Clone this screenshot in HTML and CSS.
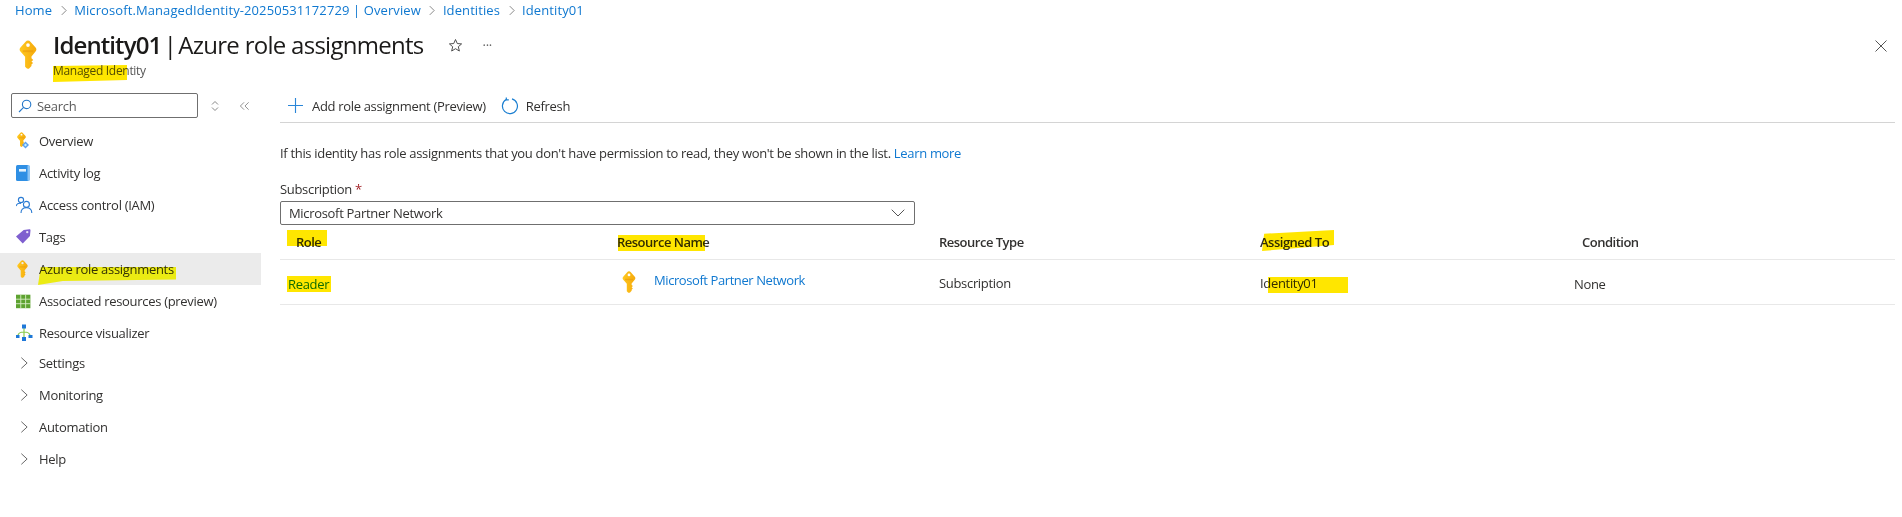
FILE: index.html
```html
<!DOCTYPE html>
<html lang="en">
<head>
<meta charset="utf-8">
<title>Identity01 | Azure role assignments</title>
<link rel="stylesheet" href="styles.css">
</head>
<body>
<svg class="defs" width="0" height="0" aria-hidden="true">
  <defs>
    <linearGradient id="keyGrad" x1="0" y1="0" x2="1" y2="0">
      <stop offset="0" stop-color="#ffc91f"/>
      <stop offset="1" stop-color="#f5a90c"/>
    </linearGradient>
    <symbol id="key" viewBox="0 0 18 30">
      <path fill="url(#keyGrad)" fill-rule="evenodd" d="M9 0.5 C10 0.5 10.8 1 11.5 1.8 L16.6 7.5 C18 9 18 10.6 16.8 12 L12.6 17 L12.6 19 L14.4 20.6 L12.6 22.2 L14.2 23.8 L12.6 25.4 L12.6 26.8 L10.4 29.2 C9.6 30 8 30 7.3 29 L6 27.6 L6 17.4 L1.2 12 C0 10.6 0 9 1.4 7.5 L6.5 1.8 C7.2 1 8 0.5 9 0.5 Z M9 3.4 A1.9 1.9 0 1 0 9 7.2 A1.9 1.9 0 1 0 9 3.4 Z"/>
      <rect x="3.6" y="10.6" width="10.8" height="2" fill="#e8950a" opacity=".55"/>
    </symbol>
  </defs>
</svg>

<nav class="crumbs">
  <a href="#">Home</a><span class="sep"><svg viewBox="0 0 8 12"><path d="M2 1l5 5-5 5"/></svg></span>
  <a href="#">Microsoft.ManagedIdentity-20250531172729 | Overview</a><span class="sep"><svg viewBox="0 0 8 12"><path d="M2 1l5 5-5 5"/></svg></span>
  <a href="#">Identities</a><span class="sep"><svg viewBox="0 0 8 12"><path d="M2 1l5 5-5 5"/></svg></span>
  <a href="#">Identity01</a>
</nav>

<header class="head">
  <svg class="head-key"><use href="#key"/></svg>
  <div class="head-text">
    <div class="title-row">
      <h1 class="title"><b>Identity01</b> <span class="pipe">|</span> <span class="title-rest">Azure role assignments</span></h1>
      <svg class="star" viewBox="0 0 16 16"><path d="M8 1.6l1.9 4.3 4.6.4-3.5 3 1.1 4.6L8 11.4l-4.1 2.5L5 9.3l-3.5-3 4.6-.4z"/></svg>
      <span class="more">···</span>
    </div>
    <div class="subtitle"><i class="mark mark-sub"></i>Managed Identity</div>
  </div>
  <svg class="close" viewBox="0 0 12 12"><path d="M.5.5l11 11M11.5.5l-11 11"/></svg>
</header>

<div class="page">
  <aside class="side">
    <div class="side-top">
      <div class="search">
        <svg viewBox="0 0 14 14"><circle cx="8.6" cy="5.4" r="4.2"/><path d="M5.6 8.4L1 13"/></svg>
        <span>Search</span>
      </div>
      <svg class="updown" viewBox="0 0 8 12"><path d="M1 4.5L4 1.5l3 3M1 7.5l3 3 3-3"/></svg>
      <svg class="collapse" viewBox="0 0 12 10"><path d="M5.5 1L1.5 5l4 4M10.5 1l-4 4 4 4"/></svg>
    </div>
    <ul class="menu">
      <li class="item">
        <svg class="ico" viewBox="0 0 18 18"><use href="#key" x="1" y="0" width="9" height="15"/><path fill="#5ea0ef" d="M9.500 9.500l3.500 3.500-3.500 3.500-3.500-3.500z"/><path fill="#c3f1ff" d="M9.500 11.500l1.500 1.500-1.500 1.500-1.500-1.500z"/></svg>
        <span>Overview</span>
      </li>
      <li class="item">
        <svg class="ico" viewBox="0 0 18 18"><rect x="0" y="1" width="13.500" height="16" rx="1.5" fill="#2f8fe4"/><rect x="11.500" y="1" width="2" height="16" rx="1" fill="#8cc4f4"/><rect x="3" y="5" width="7" height="2.6" fill="#e6f3fd"/></svg>
        <span>Activity log</span>
      </li>
      <li class="item">
        <svg class="ico ico-line" viewBox="1 0 18 18"><circle cx="6" cy="4" r="2.6"/><path d="M1 10c.6-2 2.4-3 5-2.6"/><circle cx="11.4" cy="8.4" r="3"/><path d="M6 17c0-3.2 2.2-5.2 5.4-5.2s5.400 2 5.400 5.200"/></svg>
        <span>Access control (IAM)</span>
      </li>
      <li class="item">
        <svg class="ico" viewBox="1 0 20 20"><path fill="#7f5fcf" d="M1 9.500L9.500 2.200 16 1.500c.7 0 1.200.5 1.100 1.200L16.500 9 8.500 17.200z"/><circle cx="13.500" cy="4.500" r="1.300" fill="#e8e0f8"/></svg>
        <span>Tags</span>
      </li>
      <li class="item item-active">
        <svg class="ico ico-key"><use href="#key"/></svg>
        <span class="marked"><i class="mark mark-nav"></i>Azure role assignments</span>
      </li>
      <li class="item">
        <svg class="ico" viewBox="1 -1 20 20"><path fill="#5ea331" d="M1 2h16v15H1z"/><path stroke="#d8ecc6" stroke-width="1" d="M6.300 2v15M11.700 2v15M1 7h16M1 12h16"/></svg>
        <span>Associated resources (preview)</span>
      </li>
      <li class="item">
        <svg class="ico" viewBox="1 0 18 18"><path fill="none" stroke="#8ccb4e" stroke-width="1.200" d="M9 4v9M3 12c0-3 3-4 6-4s6 1 6 4"/><path fill="#1f78d8" d="M7 .5h4v4H7zM.5 11h4v3h-4zM7 13h4v4H7zM13.500 11h4v3h-4z"/></svg>
        <span>Resource visualizer</span>
      </li>
      <li class="item item-first"><svg class="ico ico-chev" viewBox="0 0 18 18"><path d="M6 3l6.500 6L6 15"/></svg><span>Settings</span></li>
      <li class="item"><svg class="ico ico-chev" viewBox="0 0 18 18"><path d="M6 3l6.500 6L6 15"/></svg><span>Monitoring</span></li>
      <li class="item"><svg class="ico ico-chev" viewBox="0 0 18 18"><path d="M6 3l6.500 6L6 15"/></svg><span>Automation</span></li>
      <li class="item"><svg class="ico ico-chev" viewBox="0 0 18 18"><path d="M6 3l6.500 6L6 15"/></svg><span>Help</span></li>
    </ul>
  </aside>

  <main class="main">
    <div class="toolbar">
      <button class="tool">
        <svg class="plus" viewBox="0 0 16 16"><path d="M8 0v16M0 8h16"/></svg>
        <span>Add role assignment (Preview)</span>
      </button>
      <button class="tool">
        <svg class="refresh" viewBox="0 0 18 18"><path d="M5.200 2.600A7.500 7.500 0 1 0 11 1.900"/><path d="M5.300 .4v2.500h2.500" /></svg>
        <span>Refresh</span>
      </button>
    </div>
    <p class="info">If this identity has role assignments that you don't have permission to read, they won't be shown in the list. <a href="#">Learn more</a></p>
    <label class="field-label">Subscription <em>*</em></label>
    <div class="select">
      <span>Microsoft Partner Network</span>
      <svg viewBox="0 0 14 8"><path d="M.7.7L7 7l6.300-6.300"/></svg>
    </div>
    <div class="grid">
      <div class="cell th th-role"><i class="mark mark-role"></i>Role</div>
      <div class="cell th"><i class="mark mark-res"></i>Resource Name</div>
      <div class="cell th">Resource Type</div>
      <div class="cell th"><i class="mark mark-asg"></i>Assigned To</div>
      <div class="cell th">Condition</div>

      <div class="cell td td-reader"><i class="mark mark-reader"></i><a class="reader" href="#">Reader</a></div>
      <div class="cell td td-res"><svg class="row-key"><use href="#key"/></svg><a href="#">Microsoft Partner Network</a></div>
      <div class="cell td td-up">Subscription</div>
      <div class="cell td td-up"><i class="mark mark-id"></i>Identity01</div>
      <div class="cell td td-none">None</div>
    </div>
  </main>
</div>
</body>
</html>
```
FILE: styles.css
```css
* { box-sizing: border-box; }
html, body { margin: 0; padding: 0; }
body {
  width: 1902px;
  height: 517px;
  overflow: hidden;
  background: #fff;
  color: #292827;
  font: 13px/18px "Open Sans", "Noto Sans", sans-serif;
  letter-spacing: -0.32px;
}
a { color: #0f6cbd; text-decoration: none; }
.defs { position: absolute; }

.crumbs {
  display: flex;
  align-items: center;
  height: 20px;
  padding-left: 15px;
  letter-spacing: 0.1px;
}
.crumbs a { color: #0f78d0; }
.sep { width: 22px; display: flex; justify-content: center; }
.sep svg { width: 7px; height: 11px; fill: none; stroke: #777; stroke-width: 1; }

.head {
  display: flex;
  height: 62px;
  padding: 10px 15px 0 19px;
  align-items: flex-start;
}
.head-key { width: 18px; height: 29px; margin-top: 10px; margin-right: 16px; flex: none; }
.head-text { flex: 1; }
.title-row { display: flex; align-items: center; height: 30px; }
.title { margin: 0; font-size: 24px; line-height: 30px; font-weight: 400; color: #1b1a19; letter-spacing: -0.9px; }
.title b { font-weight: 600; }
.pipe { margin: 0 -3px; }
.title-rest { letter-spacing: -0.72px; }
.star { width: 15px; height: 15px; margin-left: 24px; fill: none; stroke: #444; stroke-width: 1; }
.more { margin-left: 20px; font-size: 13px; color: #666; line-height: 16px; height: 16px; }
.subtitle { position: relative; font-size: 12px; line-height: 16px; color: #555; margin-top: 3px; width: max-content; letter-spacing: -0.3px; }
.close { width: 12px; height: 12px; margin-top: 10px; fill: none; stroke: #555; stroke-width: 1; }

.page { display: flex; }
.side { width: 261px; flex: none; letter-spacing: -0.3px; }
.side-top { display: flex; align-items: center; height: 36px; padding: 11px 0 0 11px; }
.search {
  display: flex;
  align-items: center;
  width: 187px;
  height: 25px;
  border: 1px solid #6f6f6f;
  border-radius: 2px;
  padding-left: 6px;
  color: #5b5b5b;
}
.search svg { width: 14px; height: 14px; fill: none; stroke: #2477c9; stroke-width: 1.1; margin-right: 5px; }
.updown { width: 8px; height: 12px; margin-left: 13px; fill: none; stroke: #888; stroke-width: 1; }
.collapse { width: 11px; height: 10px; margin-left: 20px; fill: none; stroke: #888; stroke-width: 1; }

.menu { list-style: none; margin: 7px 0 0; padding: 0; }
.item {
  display: flex;
  align-items: center;
  height: 32px;
  padding-left: 16px;
  color: #323130;
}
.item-first { margin-top: -2px; }
.item-active { background: #ebebeb; }
.ico { width: 18px; height: 18px; margin-right: 5px; flex: none; }
.ico-key { width: 11px; height: 18px; margin: 0 11px 0 1px; }
.ico-line { fill: none; stroke: #2a7bd3; stroke-width: 1.1; }
.ico-chev { width: 16px; height: 16px; margin: 0 7px 0 0; fill: none; stroke: #555; stroke-width: 1; }
.marked { position: relative; }

.main { flex: 1; padding: 0 7px 0 19px; min-width: 0; }
.toolbar {
  display: flex;
  height: 42px;
  padding: 8px 0 0 8px;
  align-items: center;
  border-bottom: 1px solid #d4d4d4;
  margin-top: -1px;
}
.tool {
  display: flex;
  align-items: center;
  background: none;
  border: 0;
  padding: 0;
  margin: 0 15px 0 0;
  font: inherit;
  letter-spacing: inherit;
  color: #323130;
}
.plus { width: 15px; height: 15px; margin-right: 9px; fill: none; stroke: #2a86d8; stroke-width: 1.2; }
.refresh { width: 18px; height: 18px; margin-right: 7px; fill: none; stroke: #1b7fd1; stroke-width: 1.2; }
.info { margin: 21px 0 0; color: #323130; }
.info a { color: #0f78d0; }
.field-label { display: block; margin-top: 18px; color: #323130; }
.field-label em { color: #a4262c; font-style: normal; }
.select {
  display: flex;
  justify-content: space-between;
  align-items: center;
  width: 635px;
  height: 24px;
  margin-top: 3px;
  padding: 0 9px 0 8px;
  border: 1px solid #6f6f6f;
  border-radius: 2px;
  color: #323130;
}
.select svg { width: 14px; height: 8px; fill: none; stroke: #555; stroke-width: 1; }

.grid {
  display: grid;
  grid-template-columns: 337px 322px 321px 322px 1fr;
  grid-template-rows: 35px 45px;
}
.cell { position: relative; display: flex; align-items: center; border-bottom: 1px solid #e8e8e8; }
.th { font-weight: 600; color: #323130; letter-spacing: -0.5px; }
.th-role { padding-left: 16px; }
.td { color: #323130; }
.td-reader { padding: 3px 0 0 8px; }
.reader { color: #0f78d0; }
.td-res a { margin-left: 18px; margin-top: -5px; color: #0f78d0; letter-spacing: -0.42px; }
.td-up { padding-top: 2px; }
.td-none { margin-left: -8px; padding-top: 4px; }
.row-key { width: 14px; height: 22px; margin: -1px 0 0 5px; }

.mark { position: absolute; background: #ffe600; mix-blend-mode: multiply; display: block; }
.mark-sub { left: 0; top: 2px; width: 74px; height: 17px; clip-path: polygon(0 6%, 100% 0, 100% 88%, 0 100%); }
.mark-nav { left: -1px; top: 7px; width: 138px; height: 18px; background: #ffff14; clip-path: polygon(2% 0, 100% 0, 100% 70%, 18% 78%, 0 100%); }
.mark-role { left: 7px; top: 5px; width: 40px; height: 16px; }
.mark-res { left: 1px; top: 10px; width: 87px; height: 16px; }
.mark-asg { left: 2px; top: 5px; width: 72px; height: 21px; clip-path: polygon(3% 18%, 100% 0, 100% 72%, 0 100%); }
.mark-reader { left: 7px; top: 16px; width: 44px; height: 16px; }
.mark-id { left: 8px; top: 17px; width: 80px; height: 16px; }
```
